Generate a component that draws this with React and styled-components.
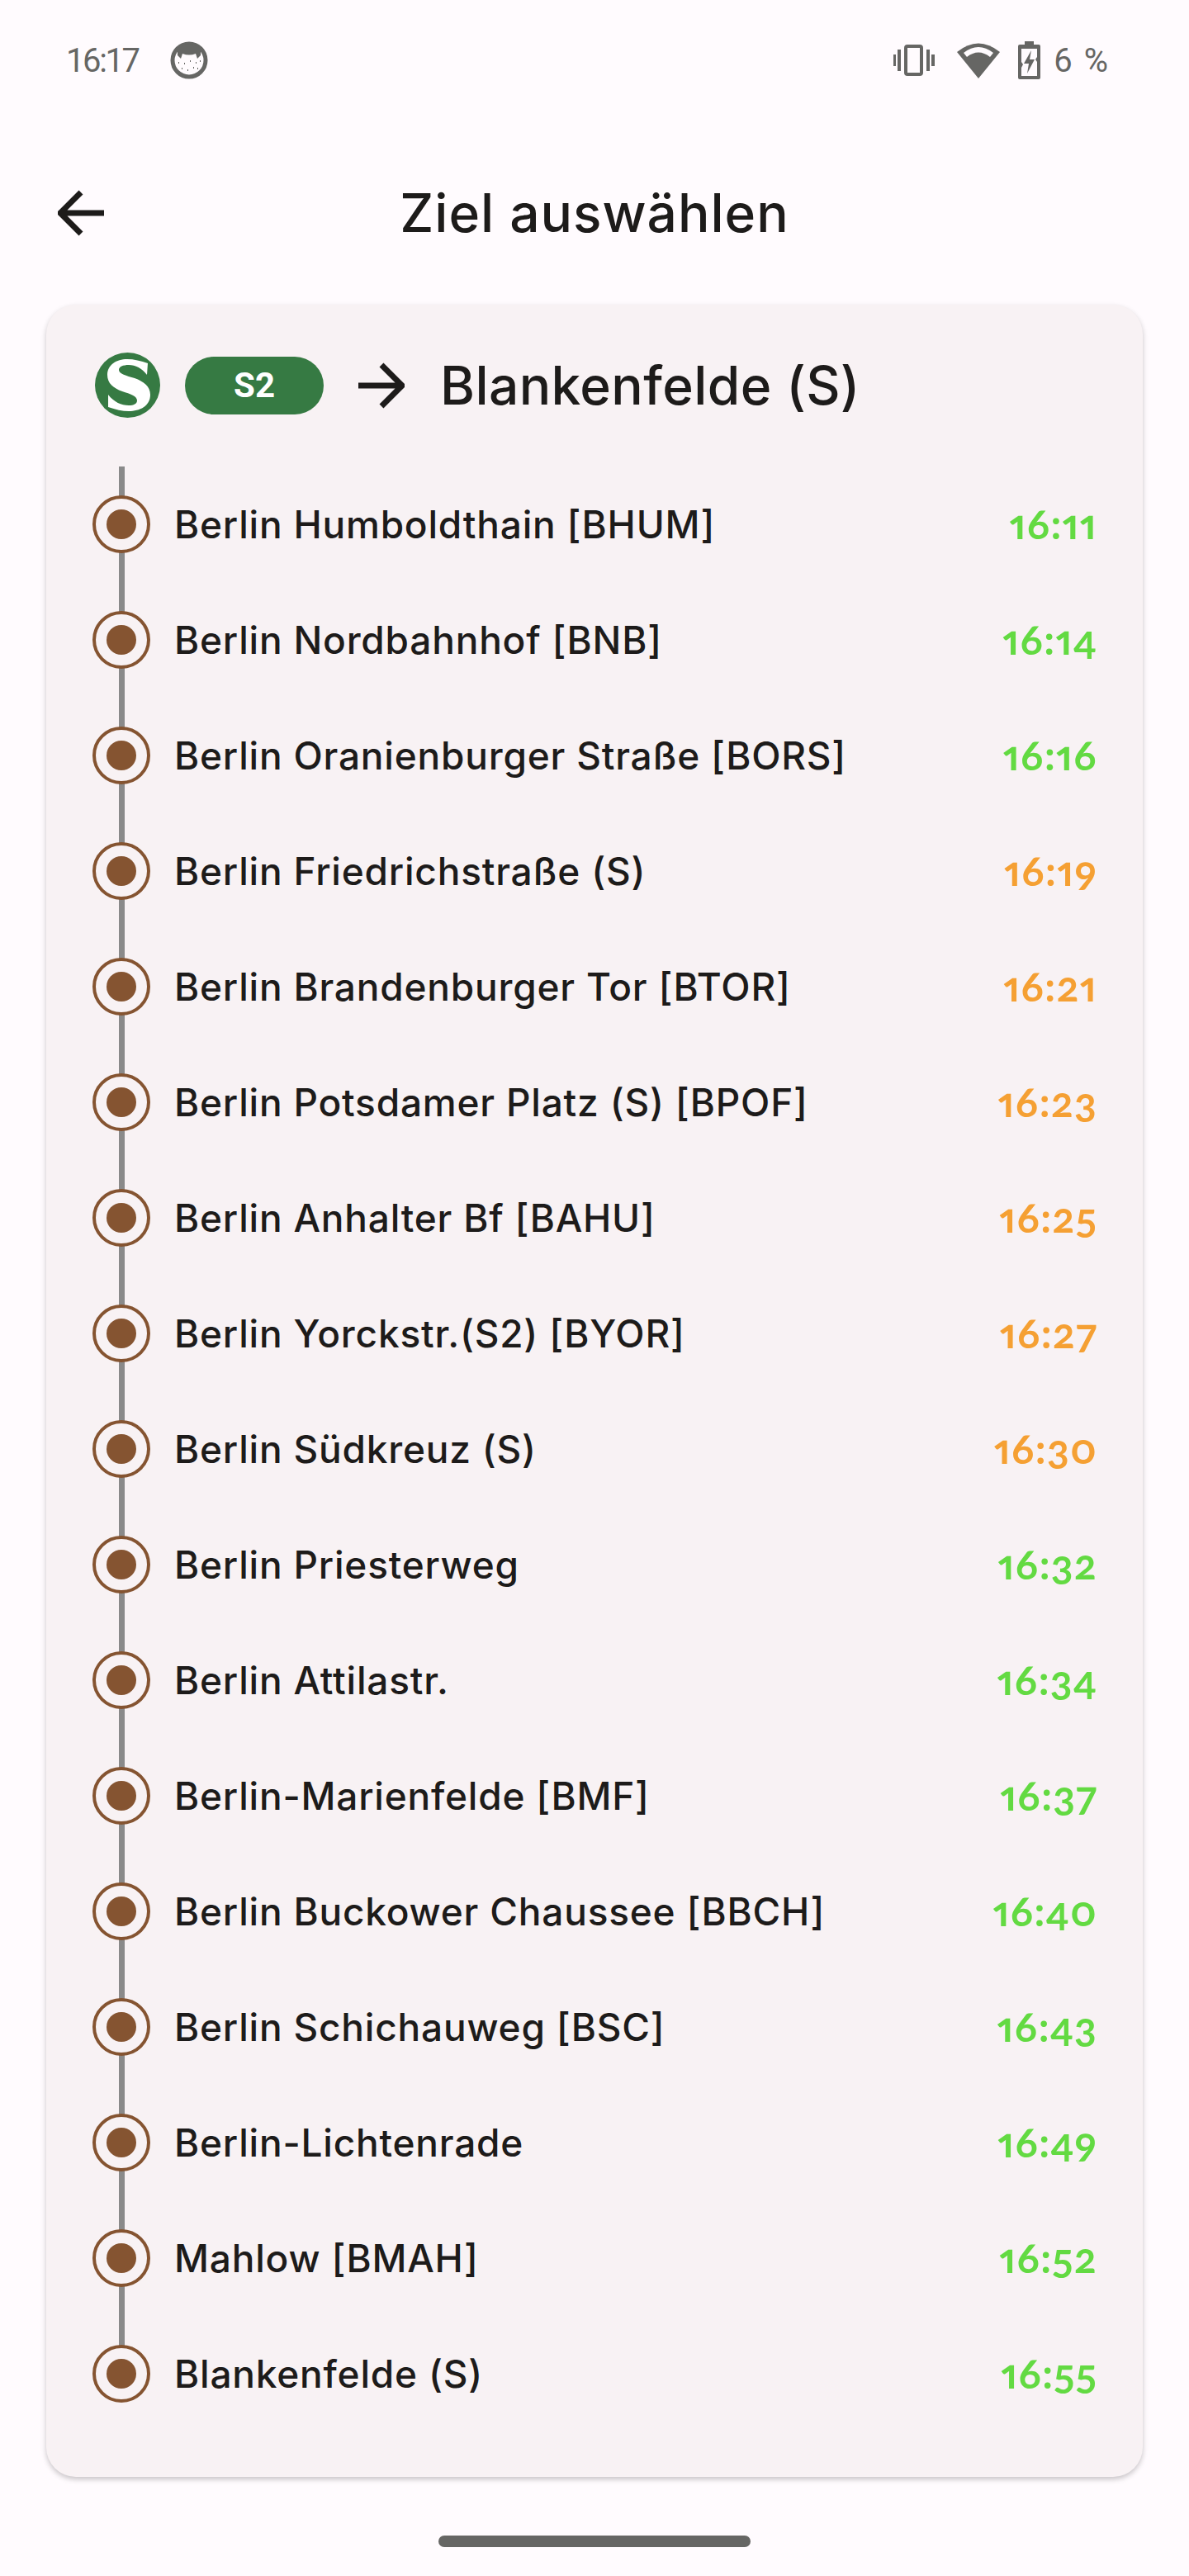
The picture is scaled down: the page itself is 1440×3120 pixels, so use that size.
import styled, { createGlobalStyle } from 'styled-components';

const stops = [
    { name: 'Berlin Humboldthain [BHUM]', time: '16:11', late: false },
    { name: 'Berlin Nordbahnhof [BNB]', time: '16:14', late: false },
    { name: 'Berlin Oranienburger Straße [BORS]', time: '16:16', late: false },
    { name: 'Berlin Friedrichstraße (S)', time: '16:19', late: true },
    { name: 'Berlin Brandenburger Tor [BTOR]', time: '16:21', late: true },
    { name: 'Berlin Potsdamer Platz (S) [BPOF]', time: '16:23', late: true },
    { name: 'Berlin Anhalter Bf [BAHU]', time: '16:25', late: true },
    { name: 'Berlin Yorckstr.(S2) [BYOR]', time: '16:27', late: true },
    { name: 'Berlin Südkreuz (S)', time: '16:30', late: true },
    { name: 'Berlin Priesterweg', time: '16:32', late: false },
    { name: 'Berlin Attilastr.', time: '16:34', late: false },
    { name: 'Berlin-Marienfelde [BMF]', time: '16:37', late: false },
    { name: 'Berlin Buckower Chaussee [BBCH]', time: '16:40', late: false },
    { name: 'Berlin Schichauweg [BSC]', time: '16:43', late: false },
    { name: 'Berlin-Lichtenrade', time: '16:49', late: false },
    { name: 'Mahlow [BMAH]', time: '16:52', late: false },
    { name: 'Blankenfelde (S)', time: '16:55', late: false },
];

export default function App() {
    return (
        <Page>
            <GlobalStyle />
            <StatusBar>
                <StatusLeft>
                    <Clock>16:17</Clock>
                    <svg width="46" height="46" viewBox="0 0 46 46">
                        <circle cx="23" cy="23" r="20" fill="#fffbfe" stroke="#666664" strokeWidth="5" />
                        <path d="M9 9 Q23 -2 37 9 L37 17 L33 21 L31 15 Q23 18 15 15 L13 21 L9 17 Z" fill="#666664" />
                        <path d="M10 26h1M17 27h1M24 24h1M31 26h1M36 24h1M14 33h1M21 35h1M28 32h1M33 33h1" stroke="#666664" strokeWidth="2" />
                    </svg>
                </StatusLeft>
                <StatusRight>
                    <svg width="50" height="38" viewBox="0 0 50 38">
                        <rect x="15" y="2" width="19" height="34" rx="2" fill="none" stroke="#666664" strokeWidth="4" />
                        <path d="M7 6v26M1 12v14M42 6v26M48 12v14" stroke="#666664" strokeWidth="4" />
                    </svg>
                    <Wifi width="54" height="45" viewBox="0 0 54 45">
                        <path d="M1 13 Q27 -8 53 13 L27 45 Z" fill="#666664" />
                        <path d="M9 14 Q27 0 45 14 L41 19 Q27 8 13 19 Z" fill="#fffbfe" />
                    </Wifi>
                    <BatteryIcon width="27" height="46" viewBox="0 0 27 46">
                        <path d="M8 0h11v4h6a2 2 0 0 1 2 2v38a2 2 0 0 1-2 2H2a2 2 0 0 1-2-2V6a2 2 0 0 1 2-2h6z" fill="#666664" />
                        <path d="M4 9h19v10l-2 3 2 3v17H4V32l2-4-2-3z" fill="#fffbfe" />
                        <path d="M16 11 L7 27 h6 l-2 12 L20 22 h-6 z" fill="#666664" />
                    </BatteryIcon>
                    <Battery>6 %</Battery>
                </StatusRight>
            </StatusBar>

            <TopBar>
                <BackIcon viewBox="0 0 56 56">
                    <path d="M56 28H4M28 3 3 28l25 25" fill="none" stroke="#1d1b1a" strokeWidth="7" />
                </BackIcon>
                <Title>Ziel auswählen</Title>
            </TopBar>

            <Card>
                <RouteHeader>
                    <SBahnLogo viewBox="0 0 79 79">
                        <circle cx="39.5" cy="39.5" r="39.5" fill="#367a43" />
                        <path d="M64 13 L63 27 C57 19 49 15 41 15 C34 15 29 17 29 21 C29 26 38 28 48 31 C59 35 67 41 67 51 C67 65 54 71 41 71 C33 71 25 69 16 66 L16 51 C23 60 32 64 41 64 C47 64 51 62 51 58 C51 53 43 50 33 47 C22 43 15 37 15 27 C15 15 26 8 39 8 C47 8 56 10 64 13 Z" fill="#fff" />
                    </SBahnLogo>
                    <LineBadge>S2</LineBadge>
                    <RouteArrow viewBox="0 0 56 56">
                        <path d="M0 28h52M28 3l25 25-25 25" fill="none" stroke="#1d1b1a" strokeWidth="7" />
                    </RouteArrow>
                    <Destination>Blankenfelde (S)</Destination>
                </RouteHeader>

                {stops.map((stop, i) => (
                    <StopRow key={stop.name}>
                        <StopMark $last={i === stops.length - 1}>
                            <Dot />
                        </StopMark>
                        <StopName>{stop.name}</StopName>
                        <StopTime $late={stop.late}>{stop.time}</StopTime>
                    </StopRow>
                ))}
            </Card>

            <HomeBar />
        </Page>
    );
}

const GlobalStyle = createGlobalStyle`
    body {
        margin: 0;
        background: #fffbfe;
    }
`;

const Page = styled.div`
    width: 1440px;
    height: 3120px;
    background: #fffbfe;
    font-family: 'Inter', 'Liberation Sans', sans-serif;
    color: #1d1b1a;
    display: flex;
    flex-direction: column;
    overflow: hidden;
`;

const StatusBar = styled.div`
    height: 146px;
    padding: 0 98px 0 80px;
    display: flex;
    align-items: center;
    justify-content: space-between;
    color: #666664;
    font-family: 'Roboto', sans-serif;
`;

const StatusLeft = styled.div`
    display: flex;
    align-items: center;
    gap: 38px;
`;

const Clock = styled.span`
    font-size: 40px;
    letter-spacing: -2.4px;
`;

const StatusRight = styled.div`
    display: flex;
    align-items: center;
    gap: 26px;
`;

const Wifi = styled.svg`
    margin-top: -1px;
`;

const BatteryIcon = styled.svg`
    margin-left: -5px;
`;

const Battery = styled.span`
    font-size: 40px;
    margin-left: -10px;
    word-spacing: 4px;
`;

const TopBar = styled.div`
    height: 223px;
    padding: 0 70px;
    display: flex;
    align-items: center;
`;

const BackIcon = styled.svg`
    width: 56px;
    height: 56px;
`;

const Title = styled.h1`
    flex: 1;
    margin: 0 56px 0 0;
    text-align: center;
    font-size: 64px;
    font-weight: 500;
    letter-spacing: 1px;
`;

const Card = styled.div`
    width: 1328px;
    margin-left: 56px;
    padding: 58px 56px 55px 56px;
    box-sizing: border-box;
    background: #f8f2f4;
    border-radius: 36px;
    box-shadow: 0 3px 6px rgba(0, 0, 0, 0.22);
`;

const RouteHeader = styled.div`
    height: 79px;
    margin-bottom: 59px;
    padding-left: 3px;
    display: flex;
    align-items: center;
`;

const SBahnLogo = styled.svg`
    width: 79px;
    height: 79px;
`;

const LineBadge = styled.div`
    width: 168px;
    height: 70px;
    margin-left: 30px;
    border-radius: 35px;
    background: #367a43;
    color: #fff;
    font-family: 'Roboto', sans-serif;
    font-size: 42px;
    font-weight: 700;
    display: flex;
    align-items: center;
    justify-content: center;
`;

const RouteArrow = styled.svg`
    width: 56px;
    height: 56px;
    margin-left: 42px;
`;

const Destination = styled.div`
    margin-left: 43px;
    font-size: 64px;
    font-weight: 500;
    letter-spacing: 0.4px;
`;

const StopRow = styled.div`
    height: 140px;
    display: flex;
    align-items: center;
`;

const StopMark = styled.div`
    width: 70px;
    align-self: stretch;
    display: flex;
    align-items: center;
    justify-content: center;
    position: relative;

    &::before {
        content: '';
        position: absolute;
        left: 32px;
        top: 0;
        bottom: ${(p) => (p.$last ? '50%' : '0')};
        width: 7px;
        background: #8a8a8a;
    }
`;

const Dot = styled.div`
    width: 70px;
    height: 70px;
    box-sizing: border-box;
    border: 4px solid #855431;
    border-radius: 50%;
    background: #f8f2f4;
    position: relative;

    &::after {
        content: '';
        position: absolute;
        inset: 13px;
        border-radius: 50%;
        background: #855431;
    }
`;

const StopName = styled.div`
    flex: 1;
    margin-left: 29px;
    font-size: 46px;
    font-weight: 500;
    letter-spacing: 0.8px;
`;

const StopTime = styled.div`
    margin: 0 -1px 2px 0;
    font-family: 'Lato', sans-serif;
    font-size: 50px;
    font-weight: 700;
    letter-spacing: 1.2px;
    font-variant-numeric: oldstyle-nums proportional-nums;
    color: ${(p) => (p.$late ? '#f5a033' : '#63da42')};
`;

const HomeBar = styled.div`
    width: 378px;
    height: 14px;
    margin: 71px 0 0 531px;
    border-radius: 7px;
    background: #666664;
`;
